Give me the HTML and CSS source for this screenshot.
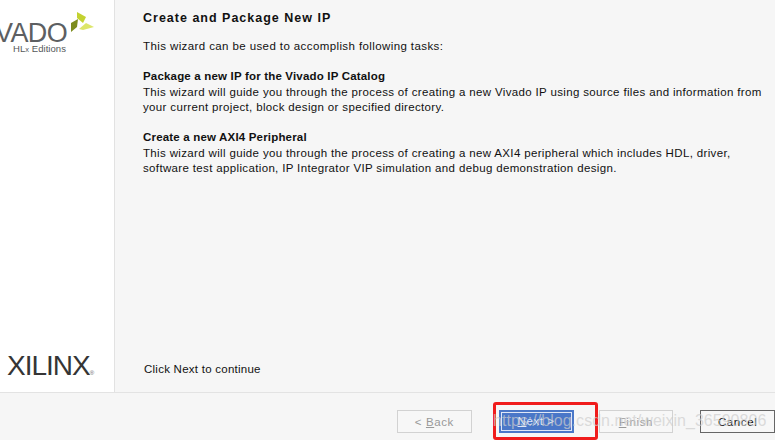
FILE: index.html
```html
<!DOCTYPE html>
<html lang="en">
<head>
<meta charset="utf-8">
<title>Create and Package New IP</title>
<link rel="stylesheet" href="styles.css">
</head>
<body>
<div class="wizard">
  <div class="main">
    <aside class="side">
      <div class="vivado">
        <div class="vivado-word">VADO</div>
        <div class="vivado-sub">HL<span class="small-x">x</span> Editions</div>
        <svg class="leaf" width="24" height="21" viewBox="0 0 24 21">
          <path d="M6 0 L15 5 L12 11 L6 6 Z" fill="#c3d230"/>
          <path d="M0 11 L7 7 L6 15 L0 20 Z" fill="#7d8c1e"/>
          <path d="M8 17 L15 11 L23 15 L12 18 Z" fill="#dde66a"/>
        </svg>
      </div>
      <div class="xilinx">XILINX<span class="reg">®</span></div>
    </aside>
    <section class="content">
      <h1 class="title">Create and Package New IP</h1>
      <p class="intro">This wizard can be used to accomplish following tasks:</p>
      <div class="task">
        <h2 class="task-title">Package a new IP for the Vivado IP Catalog</h2>
        <p class="task-text">This wizard will guide you through the process of creating a new Vivado IP using source files and information from<br>your current project, block design or specified directory.</p>
      </div>
      <div class="task">
        <h2 class="task-title">Create a new AXI4 Peripheral</h2>
        <p class="task-text">This wizard will guide you through the process of creating a new AXI4 peripheral which includes HDL, driver,<br>software test application, IP Integrator VIP simulation and debug demonstration design.</p>
      </div>
      <p class="hint">Click Next to continue</p>
    </section>
  </div>
  <footer class="footer">
    <button class="btn btn-back">&lt; <u>B</u>ack</button>
    <button class="btn btn-primary"><span class="btn-inner"><u>N</u>ext &gt;</span></button>
    <button class="btn btn-finish"><u>F</u>inish</button>
    <button class="btn btn-cancel">Cancel</button>
  </footer>
  <div class="redbox"></div>
  <div class="watermark">https://blog.csdn.net/weixin_36590806</div>
</div>
</body>
</html>
```
FILE: styles.css
```css
* { box-sizing: border-box; }
html, body { margin: 0; padding: 0; }
body { width: 775px; height: 440px; overflow: hidden; background: #f6f6f6; font-family: "Liberation Sans", Arial, sans-serif; color: #111; }
.wizard { position: relative; width: 775px; height: 440px; display: flex; flex-direction: column; }
.main { display: flex; height: 393px; border-bottom: 1px solid #e3e3e3; }
.side { width: 115px; background: #fff; border-right: 1px solid #e2e2e2; display: flex; flex-direction: column; justify-content: space-between; overflow: hidden; }
.vivado { position: relative; height: 60px; }
.vivado-word { position: absolute; left: -5px; top: 20px; font-size: 27px; line-height: 27px; color: #5d5f62; letter-spacing: -.6px; white-space: nowrap; }
.vivado-sub { position: absolute; left: 13px; top: 43px; font-size: 9.5px; line-height: 12px; color: #55575a; letter-spacing: .05px; white-space: nowrap; }
.small-x { font-size: 7.5px; }
.leaf { position: absolute; left: 71px; top: 12px; }
.xilinx { padding: 0 0 4px 7px; font-size: 28px; line-height: 30px; color: #353535; letter-spacing: -1px; white-space: nowrap; }
.reg { font-size: 6px; letter-spacing: 0; color: #666; }
.content { flex: 1; padding: 11px 0 0 28px; display: flex; flex-direction: column; font-size: 11.5px; line-height: 16px; }
.title { margin: 0 0 13px; font-size: 12.5px; line-height: 14px; font-weight: 700; letter-spacing: 1px; white-space: nowrap; }
.intro { margin: 0 0 14px; letter-spacing: .4px; }
.task { margin-bottom: 14px; }
.task-title { margin: 0 0 1px; font-size: 11.5px; line-height: 16px; font-weight: 700; letter-spacing: .18px; }
.task-text { margin: 0; line-height: 15px; letter-spacing: .35px; white-space: nowrap; }
.hint { margin: auto 0 15px 1px; letter-spacing: .25px; }
.footer { flex: 1; display: flex; align-items: flex-start; padding: 17px 0 0 397px; }
.btn { height: 23px; width: 75px; padding: 0; font: 11.5px "Liberation Sans", Arial, sans-serif; background: #f7f7f7; border: 1px solid #d2d2d2; color: #999; letter-spacing: .6px; }
.btn-back { margin-right: 27px; }
.btn-primary { margin-right: 25px; padding: 1px; background: #4a77c8; border-color: #4a77c8; color: #dfe8f8; }
.btn-finish { margin-right: 27px; }
.btn-inner { display: block; height: 100%; line-height: 17px; border: 1px solid #dfe7f7; }
.btn-cancel { border-color: #666; color: #111; }
.redbox { position: absolute; left: 493px; top: 402px; width: 105px; height: 38px; border: 3px solid #f01c1c; border-radius: 3px; }
.watermark { position: absolute; left: 493px; top: 410px; font-size: 16px; line-height: 22px; letter-spacing: .03px; color: rgba(205,205,205,.7); white-space: nowrap; }
```
